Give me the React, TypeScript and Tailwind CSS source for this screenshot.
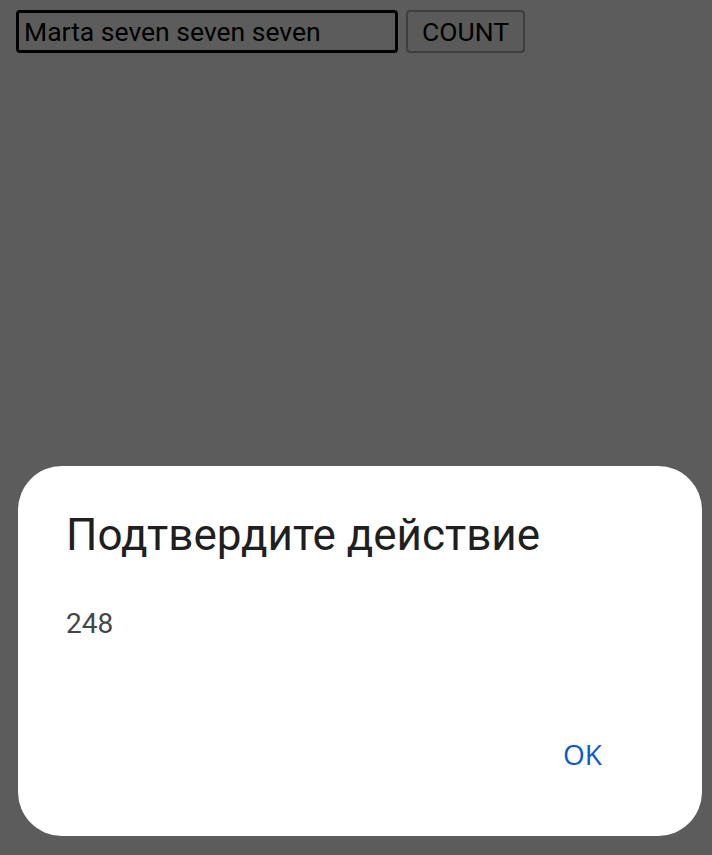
export default function App() {
  return (
    <div className="relative h-[855px] w-[712px] overflow-hidden bg-white font-['Roboto',sans-serif]">
      <div className="flex items-start gap-2 pl-4 pt-[10px]">
        <input
          readOnly
          value="Marta seven seven seven"
          className="h-[43px] w-[382px] rounded-[4px] border-[3px] border-black px-[5px] text-[26.5px] text-black outline-none"
        />
        <button className="h-[43px] w-[119px] rounded-[4px] border-2 border-[#ababab] bg-[#fafafa] text-[26.5px] text-black">
          COUNT
        </button>
      </div>

      <div className="absolute inset-0 flex flex-col justify-end bg-black/[0.64] pb-[19px]">
        <div className="ml-[18px] flex h-[370px] w-[684px] flex-col rounded-[44px] bg-white pl-12 pr-[100px] pt-[40px]">
          <h2 className="text-[44px] leading-[58px] font-normal text-[#1f1f1f]">Подтвердите действие</h2>
          <p className="mt-[42px] text-[28px] leading-[36px] text-[#444746]">248</p>
          <div className="mt-auto mb-[64px] flex justify-end">
            <button className="text-[28px] leading-[36px] font-medium text-[#0b57d0] font-['Open_Sans',sans-serif]">OK</button>
          </div>
        </div>
      </div>
    </div>
  );
}
